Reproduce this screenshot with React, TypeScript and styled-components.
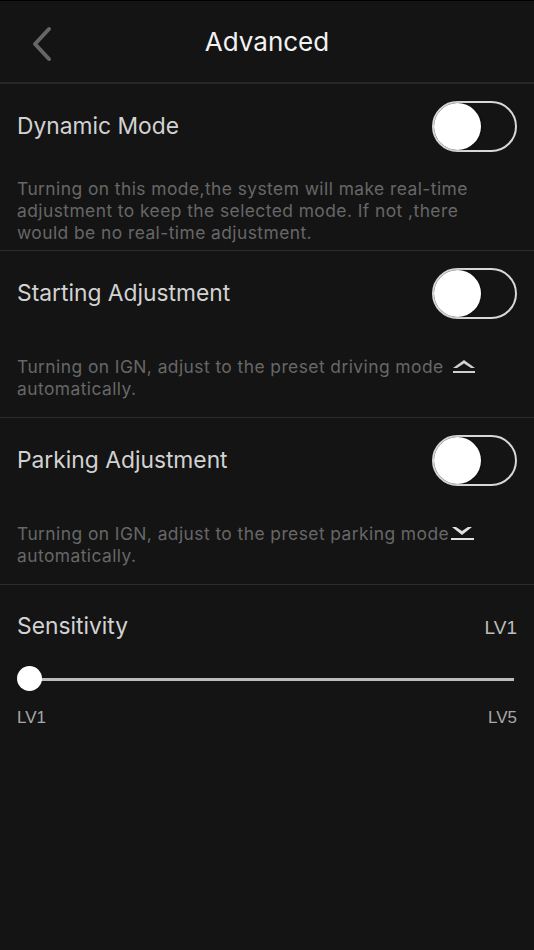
import React, { useState } from 'react';
import styled, { createGlobalStyle } from 'styled-components';

const GlobalStyle = createGlobalStyle`
  html, body {
    margin: 0;
    padding: 0;
    background: #141414;
  }
  body {
    font-family: Inter, "Liberation Sans", Arial, sans-serif;
    -webkit-font-smoothing: antialiased;
  }
`;

const Screen = styled.div`
  width: 534px;
  height: 950px;
  background: #141414;
  border-top: 1px solid #000;
  box-sizing: border-box;
  display: flex;
  flex-direction: column;
`;

const Header = styled.div`
  height: 81px;
  display: flex;
  align-items: center;
  justify-content: center;
  position: relative;
  border-bottom: 2px solid #262626;
`;

const BackButton = styled.button`
  position: absolute;
  left: 28px;
  top: 24px;
  width: 28px;
  height: 38px;
  padding: 0;
  border: none;
  background: transparent;
  display: flex;
  align-items: center;
  justify-content: center;
`;

const Title = styled.h1`
  margin: 0;
  font-size: 26px;
  font-weight: 400;
  color: #f2f2f2;
`;

const Section = styled.div<{ $descTop: number }>`
  height: 167px;
  box-sizing: border-box;
  padding: 17px 17px 0 17px;
  border-bottom: 1px solid #2c2c2c;
  display: flex;
  flex-direction: column;
  --desc-top: ${({ $descTop }) => $descTop}px;
`;

const Row = styled.div`
  display: flex;
  align-items: center;
  justify-content: space-between;
  height: 51px;
`;

const Label = styled.span`
  font-size: 22.8px;
  color: #d2d2d2;
  margin-top: -2px;
`;

const Description = styled.p`
  margin: var(--desc-top) 0 0 0;
  max-width: 472px;
  font-size: 17.4px;
  line-height: 22px;
  letter-spacing: 0.44px;
  color: #676767;
`;

const Track = styled.button<{ $on: boolean }>`
  width: 85px;
  height: 51px;
  border-radius: 26px;
  border: 2px solid #d8d8d8;
  background: ${({ $on }) => ($on ? '#d8d8d8' : 'transparent')};
  padding: 0;
  box-sizing: border-box;
  display: flex;
  align-items: center;
  justify-content: ${({ $on }) => ($on ? 'flex-end' : 'flex-start')};
  cursor: pointer;
`;

const Knob = styled.span`
  width: 47px;
  height: 47px;
  border-radius: 50%;
  background: #fff;
  box-shadow: 1px 0 2px rgba(0, 0, 0, 0.4);
`;

const InlineIcon = styled.svg<{ $gap: number }>`
  vertical-align: -1px;
  margin-left: ${({ $gap }) => $gap}px;
`;

const SensitivitySection = styled.div`
  padding: 29px 17px 0 17px;
  display: flex;
  flex-direction: column;
`;

const SensitivityHead = styled.div`
  display: flex;
  justify-content: space-between;
  align-items: baseline;
`;

const Level = styled.span`
  font-family: "Liberation Sans", Arial, sans-serif;
  font-size: 19px;
  color: #bdbdbd;
`;

const SliderArea = styled.div`
  position: relative;
  height: 26px;
  margin-top: 27px;
  display: flex;
  align-items: center;
`;

const SliderLine = styled.div`
  flex: 1;
  height: 3px;
  margin-left: 12px;
  margin-right: 3px;
  background: #bcbcbc;
`;

const Thumb = styled.div`
  position: absolute;
  left: 0;
  top: 0;
  width: 25px;
  height: 25px;
  border-radius: 50%;
  background: #fff;
`;

const Scale = styled.div`
  display: flex;
  justify-content: space-between;
  margin-top: 16px;
`;

const ScaleText = styled.span`
  font-family: "Liberation Sans", Arial, sans-serif;
  font-size: 17px;
  color: #a8a8a8;
`;

const Toggle: React.FC = () => {
  const [on, setOn] = useState(false);
  return (
    <Track $on={on} onClick={() => setOn(!on)}>
      <Knob />
    </Track>
  );
};

const UpIcon = () => (
  <InlineIcon $gap={3} width="24" height="16" viewBox="0 0 24 16">
    <path d="M1 10 L12 2 L23 10 L19 10 L12 5.5 L5 10 Z" fill="#cfcfcf" />
    <rect x="1" y="13" width="22" height="2" fill="#cfcfcf" />
  </InlineIcon>
);

const DownIcon = () => (
  <InlineIcon $gap={1} width="24" height="16" viewBox="0 0 24 16">
    <path d="M2 2 L12 10 L22 2 L18 2 L12 6 L6 2 Z" fill="#e0e0e0" />
    <rect x="1" y="13" width="23" height="2" fill="#e0e0e0" />
  </InlineIcon>
);

const App: React.FC = () => {
  return (
    <>
      <GlobalStyle />
      <Screen>
        <Header>
          <BackButton aria-label="Back">
            <svg width="24" height="36" viewBox="0 0 24 36">
              <path d="M19 3 L5 18 L19 33" stroke="#666" strokeWidth="4" fill="none" strokeLinecap="round" strokeLinejoin="round" />
            </svg>
          </BackButton>
          <Title>Advanced</Title>
        </Header>

        <Section $descTop={26}>
          <Row>
            <Label>Dynamic Mode</Label>
            <Toggle />
          </Row>
          <Description>
            Turning on this mode,the system will make real-time adjustment to keep the selected mode. If not ,there would be no real-time adjustment.
          </Description>
        </Section>

        <Section $descTop={37}>
          <Row>
            <Label>Starting Adjustment</Label>
            <Toggle />
          </Row>
          <Description>
            Turning on IGN, adjust to the preset driving mode <UpIcon />
            <br />
            automatically.
          </Description>
        </Section>

        <Section $descTop={37}>
          <Row>
            <Label>Parking Adjustment</Label>
            <Toggle />
          </Row>
          <Description>
            Turning on IGN, adjust to the preset parking mode<DownIcon />
            <br />
            automatically.
          </Description>
        </Section>

        <SensitivitySection>
          <SensitivityHead>
            <Label>Sensitivity</Label>
            <Level>LV1</Level>
          </SensitivityHead>
          <SliderArea>
            <SliderLine />
            <Thumb />
          </SliderArea>
          <Scale>
            <ScaleText>LV1</ScaleText>
            <ScaleText>LV5</ScaleText>
          </Scale>
        </SensitivitySection>
      </Screen>
    </>
  );
};

export default App;
